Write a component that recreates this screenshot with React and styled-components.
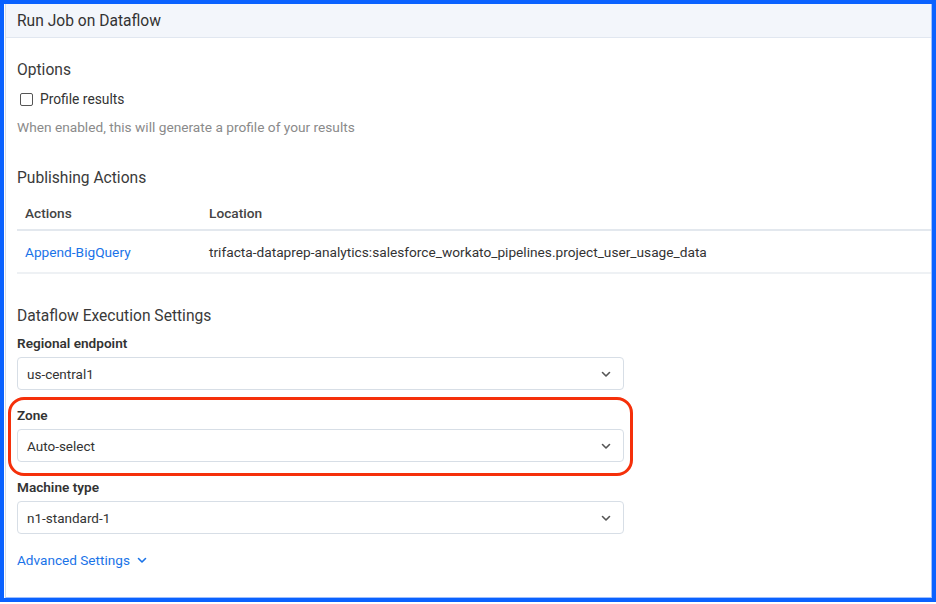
import React from "react";
import styled, { createGlobalStyle } from "styled-components";

const Global = createGlobalStyle`
  html, body { margin: 0; padding: 0; background: #fff; }
  body { font-family: Roboto, "Open Sans", Arial, sans-serif; color: #3c4043; }
  * { box-sizing: border-box; }
`;

const Frame = styled.div`
  width: 936px;
  height: 602px;
  border: 4px solid #0a62ff;
  background: #fff;
  display: flex;
`;

const Panel = styled.div`
  flex: 1;
  margin-left: 1px;
  border-left: 1px solid #d8dde3;
  border-right: 1px solid #9ec0ff;
  border-bottom: 1px solid #9ec0ff;
  display: flex;
  flex-direction: column;
`;

const Header = styled.div`
  height: 34px;
  background: #f3f6fb;
  border-bottom: 1px solid #e1e7f0;
  padding: 0 11px;
  display: flex;
  align-items: center;
  font-size: 15.6px;
  color: #333;
`;

const Body = styled.div`
  padding: 0 0 0 11px;
  display: flex;
  flex-direction: column;
`;

const SectionTitle = styled.div`
  font-size: 15.6px;
  color: #3a3a3a;
  margin-top: ${(p) => p.$top}px;
  line-height: 20px;
`;

const CheckRow = styled.label`
  display: flex;
  align-items: center;
  gap: 7px;
  margin-top: 10px;
  font-size: 13.8px;
  color: #333;
  padding-left: 3px;
  line-height: 18px;
`;

const Box = styled.span`
  width: 13px;
  height: 13px;
  border: 1.5px solid #555;
  border-radius: 2px;
  display: inline-block;
`;

const Hint = styled.div`
  font-size: 13.7px;
  color: #8a8a8a;
  margin-top: 10px;
  line-height: 18px;
`;

const Table = styled.div`
  margin-top: 9px;
  display: flex;
  flex-direction: column;
`;

const Row = styled.div`
  display: grid;
  grid-template-columns: 184px 1fr;
  height: ${(p) => p.$h}px;
  align-items: center;
  border-bottom: 2px solid ${(p) => (p.$head ? "#e3e8ee" : "#eef1f4")};
  font-size: 13.7px;
  color: ${(p) => (p.$head ? "#444" : "#333")};
  font-weight: ${(p) => (p.$head ? 500 : 400)};
`;

const Cell = styled.div`
  padding-left: 8px;
  white-space: nowrap;
`;

const Link = styled.a`
  color: #1a73e8;
  text-decoration: none;
  cursor: pointer;
`;

const Field = styled.div`
  position: relative;
  width: 607px;
  margin-top: ${(p) => p.$top}px;
  ${(p) =>
    p.$highlight &&
    `
    &::before {
      content: "";
      position: absolute;
      left: -9px;
      top: -10px;
      right: -9px;
      bottom: -14px;
      border: 3px solid #f5300a;
      border-radius: 16px;
      pointer-events: none;
    }
  `}
`;

const FieldLabel = styled.div`
  font-size: 13.6px;
  font-weight: 600;
  color: #333;
  line-height: 16px;
  margin-bottom: 6px;
`;

const Select = styled.div`
  height: 33px;
  border: 1px solid #d7dee6;
  border-radius: 4px;
  display: flex;
  align-items: center;
  justify-content: space-between;
  padding: 0 11px 0 9px;
  font-size: 13.5px;
  color: #333;
`;

const Advanced = styled.div`
  margin-top: 18px;
  display: flex;
  align-items: center;
  gap: 6px;
  font-size: 13.6px;
  color: #1a73e8;
`;

const Chevron = ({ color = "#555", size = 12 }) => (
  <svg width={size} height={size} viewBox="0 0 12 12" fill="none">
    <path d="M2.5 4.5 L6 8 L9.5 4.5" stroke={color} strokeWidth="1.6" strokeLinecap="round" strokeLinejoin="round" />
  </svg>
);

const fields = [
  { label: "Regional endpoint", value: "us-central1", top: 9 },
  { label: "Zone", value: "Auto-select", top: 17, highlight: true },
  { label: "Machine type", value: "n1-standard-1", top: 17 },
];

export default function App() {
  return (
    <>
      <Global />
      <Frame>
        <Panel>
          <Header>Run Job on Dataflow</Header>
          <Body>
            <SectionTitle $top={22}>Options</SectionTitle>
            <CheckRow>
              <Box />
              Profile results
            </CheckRow>
            <Hint>When enabled, this will generate a profile of your results</Hint>

            <SectionTitle $top={32}>Publishing Actions</SectionTitle>
            <Table>
              <Row $head $h={34}>
                <Cell>Actions</Cell>
                <Cell>Location</Cell>
              </Row>
              <Row $h={43}>
                <Cell>
                  <Link>Append-BigQuery</Link>
                </Cell>
                <Cell>trifacta-dataprep-analytics:salesforce_workato_pipelines.project_user_usage_data</Cell>
              </Row>
            </Table>

            <SectionTitle $top={32}>Dataflow Execution Settings</SectionTitle>
            {fields.map((f) => (
              <Field key={f.label} $top={f.top} $highlight={f.highlight}>
                <FieldLabel>{f.label}</FieldLabel>
                <Select>
                  {f.value}
                  <Chevron />
                </Select>
              </Field>
            ))}
            <Advanced>
              Advanced Settings
              <Chevron color="#1a73e8" />
            </Advanced>
          </Body>
        </Panel>
      </Frame>
    </>
  );
}
